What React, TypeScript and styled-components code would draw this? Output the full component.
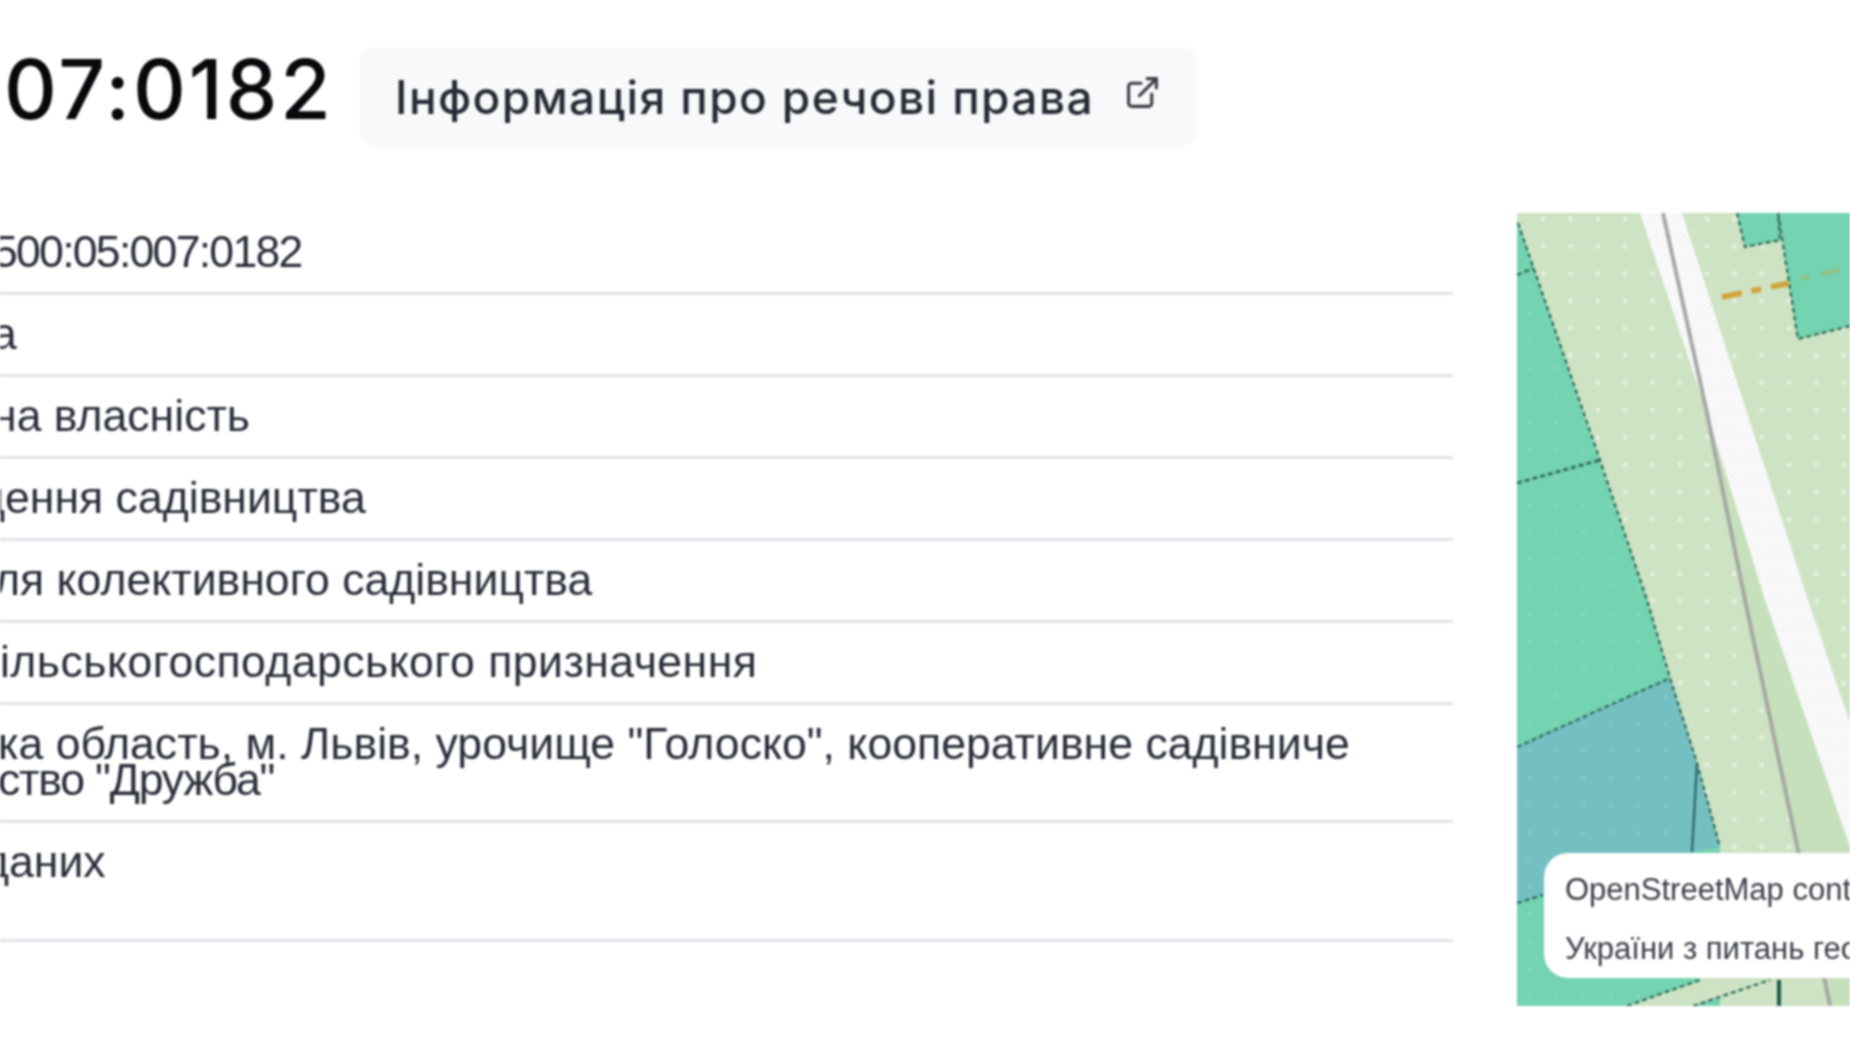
import React from "react";
import styled, { createGlobalStyle } from "styled-components";
import { ExternalLink } from "lucide-react";

const Global = createGlobalStyle`
  html, body { margin: 0; padding: 0; background: #fff; overflow: hidden; }
  #root { width: 1850px; height: 1040px; overflow: hidden; }
`;

const Page = styled.div`
  width: 1850px;
  height: 1040px;
  overflow: hidden;
  background: #fff;
  font-family: "Liberation Sans", Arial, sans-serif;
  filter: blur(0.9px);
`;

const Header = styled.header`
  display: flex;
  align-items: center;
  gap: 30px;
  height: 100px;
  margin-top: 47px;
`;

const Title = styled.h1`
  width: 330px;
  box-sizing: border-box;
  margin: 0;
  padding: 0 0 14px 4px;
  font-family: Inter, "Liberation Sans", sans-serif;
  font-size: 82px;
  font-weight: 500;
  letter-spacing: 2.9px;
  line-height: 86px;
  color: #08090c;
  white-space: nowrap;
`;

const RightsButton = styled.a`
  display: flex;
  align-items: center;
  gap: 30px;
  width: 837px;
  height: 100px;
  box-sizing: border-box;
  padding: 0 38px 0 35px;
  background: #f8f9fa;
  border-radius: 16px;
  color: #252a35;
  font-family: Inter, "Liberation Sans", sans-serif;
  font-size: 46px;
  font-weight: 500;
  letter-spacing: 1.4px;
  white-space: nowrap;
`;

const LinkIcon = styled(ExternalLink)`
  flex: none;
  margin-bottom: 9px;
`;

const Body = styled.main`
  display: flex;
  gap: 64px;
  margin-top: 66px;
`;

const Table = styled.div`
  width: 1453px;
  flex: none;
  overflow: hidden;
`;

const Row = styled.div<{ $tall?: boolean }>`
  box-sizing: border-box;
  min-height: ${(p) => (p.$tall ? "119px" : "82px")};
  padding: 20.5px 0 22.5px;
  border-bottom: 3px solid #e2e3e8;
`;

const Value = styled.div<{ $indent: number; $spacing?: number }>`
  margin-left: ${(p) => p.$indent}px;
  letter-spacing: ${(p) => p.$spacing ?? 0}px;
  font-size: 44.6px;
  line-height: 36px;
  color: #282d38;
  white-space: nowrap;
`;

const MapBox = styled.div`
  position: relative;
  width: 333px;
  height: 793px;
  flex: none;
  overflow: hidden;
  background: #cde3c3;
`;

const MapArt = styled.svg`
  display: block;
  width: 333px;
  height: 793px;
`;

const Attribution = styled.div`
  position: absolute;
  left: 27px;
  top: 640px;
  width: 420px;
  height: 125px;
  box-sizing: border-box;
  padding: 7px 0 0 21px;
  background: #fff;
  border-radius: 24px;
  color: #3a3e48;
  font-size: 31px;
  line-height: 59px;
  white-space: nowrap;
`;

type Line = { text: string; indent: number; spacing?: number };

const rows: Line[][] = [
  [{ text: "500:05:007:0182", indent: -7, spacing: -1.75 }],
  [{ text: "а", indent: -8 }],
  [{ text: "на власність", indent: -8 }],
  [{ text: "дення садівництва", indent: -21 }],
  [{ text: "ля колективного садівництва", indent: -6 }],
  [{ text: "ільськогосподарського призначення", indent: 0, spacing: 0.45 }],
  [
    { text: "ка область, м. Львів, урочище \"Голоско\", кооперативне садівниче", indent: -2 },
    { text: "ство \"Дружба\"", indent: -2, spacing: -1.2 },
  ],
  [{ text: "даних", indent: -17 }],
];

const dash = "5 3";

const MapDrawing = () => (
  <MapArt viewBox="0 0 333 793">
    <defs>
      <pattern id="dots" x="-1" y="6" width="27.3" height="27.3" patternUnits="userSpaceOnUse">
        <circle cx="27.3" cy="0" r="2.4" fill="#fff" fillOpacity="0.5" />
        <circle cx="0" cy="0" r="2.4" fill="#fff" fillOpacity="0.5" />
        <circle cx="0" cy="27.3" r="2.4" fill="#fff" fillOpacity="0.5" />
        <circle cx="27.3" cy="27.3" r="2.4" fill="#fff" fillOpacity="0.5" />
      </pattern>
      <pattern id="greendots" x="-1" y="6" width="27.3" height="27.3" patternUnits="userSpaceOnUse">
        <circle cx="13" cy="13" r="2.4" fill="#fff" fillOpacity="0.12" />
      </pattern>
      <pattern id="speck" width="6" height="6" patternUnits="userSpaceOnUse">
        <rect width="6" height="6" fill="#fafafb" />
        <rect x="1" y="2" width="1" height="1" fill="#cfd0d3" />
        <rect x="4" y="4.5" width="1" height="1" fill="#d8d9db" />
      </pattern>
    </defs>
    <polygon points="0,0 0,793 333,793 333,0" fill="#cde3c3" />
    <rect width="333" height="793" fill="url(#dots)" />
    <polygon points="190,200 333,634 333,793 313,793 228,387" fill="#c6e0bc" />
    <polygon points="123,0 165,0 291,387 333,510 333,634 248,387 190,200" fill="url(#speck)" />
    <polyline points="146,0 190,200 228,387 281,637 313,793" fill="none" stroke="#a6a8a5" strokeWidth="4" />
    <polygon points="0,6 130,387 203,634 203,793 0,793" fill="#74d3b0" />
    <polygon points="0,534 153,465 180,550 203,634 175,639 175,700 26,682 0,690" fill="#74bfc2" />
    <polygon points="110,793 183,767 253,767 176,793" fill="#cde3c3" />
    <polygon points="203,640 300,640 300,793 270,793 261,767 183,767" fill="#cde3c3" />
    <polygon points="220,0 260,0 263,27 228,34" fill="#74d3b0" />
    <polygon points="261,0 333,0 333,113 281,126" fill="#74d3b0" />
    <rect width="203" height="793" fill="url(#greendots)" opacity="0.8" />
    <polyline points="1,10 83,247 130,387 153,465 180,550 203,634" fill="none" stroke="#2e6b5a" strokeWidth="2.2" strokeDasharray={dash} />
    <line x1="0" y1="62" x2="16" y2="55" stroke="#2e6b5a" strokeWidth="2.4" strokeDasharray={dash} />
    <line x1="0" y1="270" x2="83" y2="247" stroke="#2e6b5a" strokeWidth="2.8" strokeDasharray={dash} />
    <line x1="0" y1="534" x2="153" y2="465" stroke="#2e6b5a" strokeWidth="2.2" strokeDasharray={dash} />
    <line x1="0" y1="690" x2="26" y2="682" stroke="#2e6b5a" strokeWidth="2.4" strokeDasharray={dash} />
    <line x1="180" y1="550" x2="175" y2="639" stroke="#2d6a68" strokeWidth="2.4" />
    <polyline points="220,0 228,34 263,27 261,0" fill="none" stroke="#2e6b5a" strokeWidth="2.2" strokeDasharray={dash} />
    <polyline points="261,0 281,126 333,113" fill="none" stroke="#2e6b5a" strokeWidth="2.2" strokeDasharray={dash} />
    <line x1="110" y1="793" x2="183" y2="767" stroke="#2e6b5a" strokeWidth="2.2" strokeDasharray={dash} />
    <line x1="176" y1="793" x2="253" y2="767" stroke="#2e6b5a" strokeWidth="2.2" strokeDasharray={dash} />
    <line x1="262" y1="767" x2="262" y2="793" stroke="#1f5a4a" strokeWidth="4" />
    <line x1="205" y1="84" x2="273" y2="70" stroke="#d2a33a" strokeWidth="5.5" strokeDasharray="20 10 10 10 18" />
    <line x1="285" y1="65" x2="333" y2="55" stroke="#8dc28a" strokeWidth="5" strokeDasharray="8 12 18 30" />
  </MapArt>
);

export default function App() {
  return (
    <Page>
      <Global />
      <Header>
        <Title>07:0182</Title>
        <RightsButton>
          Інформація про речові права
          <LinkIcon size={37} strokeWidth={2} color="#3a3d44" />
        </RightsButton>
      </Header>
      <Body>
        <Table>
          {rows.map((lines, i) => (
            <Row key={lines[0].text} $tall={i === rows.length - 1}>
              {lines.map((l) => (
                <Value key={l.text} $indent={l.indent} $spacing={l.spacing}>
                  {l.text}
                </Value>
              ))}
            </Row>
          ))}
        </Table>
        <MapBox>
          <MapDrawing />
          <Attribution>
            OpenStreetMap contributors
            <br />
            України з питань геодезії
          </Attribution>
        </MapBox>
      </Body>
    </Page>
  );
}
